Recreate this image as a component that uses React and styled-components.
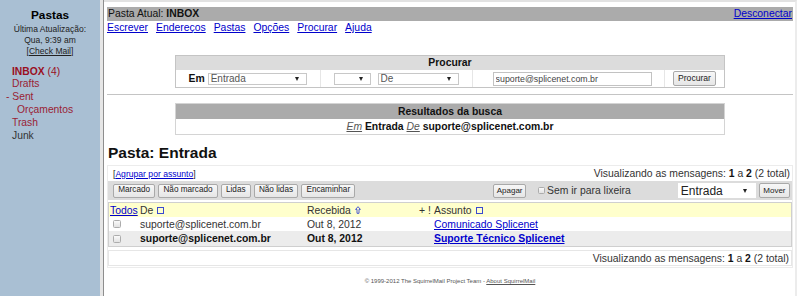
import React from "react";
import styled, { createGlobalStyle } from "styled-components";

const LINK = "#0000cc";

const GlobalStyle = createGlobalStyle`
  html, body {
    margin: 0;
    padding: 0;
    background: #fff;
  }
  body {
    font-family: "Liberation Sans", Arial, sans-serif;
    font-size: 10.4px;
    color: #222;
  }
  a {
    color: ${LINK};
    text-decoration: underline;
  }
`;

const Frame = styled.div`
  display: flex;
  width: 799px;
  height: 296px;
  overflow: hidden;
`;

/* left frame */
const Sidebar = styled.div`
  width: 100px;
  flex-shrink: 0;
  background: #a9bfd3;
  padding-top: 8px;
  box-sizing: border-box;
`;
const SideTitle = styled.div`
  font-weight: bold;
  font-size: 11.8px;
  line-height: 14px;
  text-align: center;
  color: #000;
`;
const SideInfo = styled.div`
  margin-top: 1.6px;
  font-size: 8.5px;
  line-height: 11px;
  text-align: center;
  color: #222;
  a {
    color: #222;
  }
`;
const FolderList = styled.div`
  margin-top: 9px;
  font-size: 10.3px;
  line-height: 12.8px;
`;
const Folder = styled.div`
  padding-left: ${(p) => p.$indent}px;
  color: ${(p) => p.$color};
  white-space: nowrap;
  b {
    font-weight: bold;
  }
`;

const FrameBorder = styled.div`
  width: 3px;
  flex-shrink: 0;
  background: #e6e6e6;
  border-right: 1px solid #8e8e8e;
`;

/* right frame */
const Main = styled.div`
  flex: 1;
  min-width: 0;
  margin-right: 2px;
  border-top: 2px solid #e2e2e2;
  border-right: 2px solid #ececec;
  padding: 5px 2px 0 3px;
`;
const TitleBar = styled.div`
  display: flex;
  justify-content: space-between;
  height: 14px;
  line-height: 14px;
  padding: 0 1px;
  background: #ababab;
  color: #111;
`;
const NavLinks = styled.div`
  display: flex;
  gap: 8px;
  line-height: 13px;
`;

const Box = styled.div`
  width: 80%;
  margin: ${(p) => p.$margin};
  border: 1px solid ${(p) => p.$border};
`;
const BoxHeader = styled.div`
  height: ${(p) => p.$h}px;
  line-height: ${(p) => p.$h}px;
  background: ${(p) => p.$bg};
  text-align: center;
  font-weight: bold;
  color: #111;
`;
const SearchRow = styled.div`
  display: grid;
  grid-template-columns: 144px 152px 192px 1fr;
  height: 17px;
`;
const SearchCell = styled.div`
  display: flex;
  align-items: center;
  justify-content: center;
  gap: ${(p) => p.$gap || 0}px;
  border-left: ${(p) => (p.$first ? "none" : "1px solid #e6e6e6")};
`;
const Label = styled.b`
  color: #111;
`;
const SelectBox = styled.div`
  width: ${(p) => p.$w}px;
  height: ${(p) => p.$h}px;
  box-sizing: border-box;
  border: 1px solid ${(p) => p.$border || "#c8c8c8"};
  background: #fff;
  display: flex;
  align-items: center;
  justify-content: space-between;
  padding: 0 ${(p) => p.$pr || 7}px 0 2px;
  font-size: ${(p) => p.$size}px;
  color: ${(p) => p.$color || "#555"};
`;
const Arrow = styled.span`
  width: 0;
  height: 0;
  border-left: 2.5px solid transparent;
  border-right: 2.5px solid transparent;
  border-top: 4px solid #222;
`;
const TextInput = styled.input`
  width: 159px;
  height: 14px;
  box-sizing: border-box;
  margin-left: 8px;
  border: 1px solid #c2c2c2;
  padding: 0 2px;
  font-family: inherit;
  font-size: 8.8px;
  color: #444;
  outline: none;
`;
const Button = styled.button`
  height: ${(p) => p.$h || 14}px;
  box-sizing: border-box;
  padding: 0 ${(p) => p.$px}px;
  border: 1px solid #a9a9a9;
  border-radius: 2px;
  background: linear-gradient(#f7f7f7, #e6e6e6);
  font-family: inherit;
  font-size: ${(p) => p.$size}px;
  line-height: 1;
  color: #222;
  white-space: nowrap;
`;

const Rule = styled.hr`
  margin: 6px 0 0;
  border: none;
  border-top: 1px solid #c4c4c4;
  height: 0;
`;
const ResultRow = styled.div`
  height: 15px;
  line-height: 15px;
  text-align: center;
  color: #111;
  i {
    color: #555;
    text-decoration: underline;
  }
`;

const Heading = styled.div`
  margin: 9px 0 3px 1px;
  font-size: 15.5px;
  line-height: 18px;
  font-weight: bold;
  color: #111;
`;

const MessageArea = styled.div`
  border: 1px solid #ececec;
`;
const InfoRow = styled.div`
  display: flex;
  align-items: center;
  justify-content: ${(p) => p.$justify};
  height: ${(p) => p.$h}px;
  padding: 0 2px 0 5px;
  color: #333;
  b {
    color: #111;
  }
`;
const GroupLink = styled.span`
  font-size: 8.6px;
  color: #222;
`;
const Toolbar = styled.div`
  display: flex;
  align-items: center;
  justify-content: space-between;
  height: 19px;
  padding: 0 2px 0 5px;
  background: #dcdcdc;
`;
const ButtonGroup = styled.div`
  display: flex;
  align-items: center;
  gap: 3px;
`;
const CheckBox = styled.span`
  display: inline-block;
  width: ${(p) => p.$size || 7}px;
  height: ${(p) => p.$size || 7}px;
  box-sizing: border-box;
  border: 1px solid #acacac;
  border-radius: 1.5px;
  background: linear-gradient(#fafafa, #e2e2e2);
  margin: ${(p) => p.$margin || 0};
`;
const TrashOption = styled.span`
  display: flex;
  align-items: center;
  gap: 2px;
  margin: 0 44px 0 9px;
  color: #333;
`;

const MsgTable = styled.div`
  margin-top: 2px;
  border: 1px solid #cfcfcf;
`;
const MsgRow = styled.div`
  display: grid;
  grid-template-columns: 31px 167px 112px 15px 1fr;
  align-items: center;
  height: ${(p) => p.$h}px;
  background: ${(p) => p.$bg};
  font-weight: ${(p) => (p.$bold ? "bold" : "normal")};
  color: ${(p) => (p.$bold ? "#111" : "#333")};
  white-space: nowrap;
`;
const Cell = styled.div`
  display: flex;
  align-items: center;
  gap: 4px;
  padding-left: ${(p) => p.$pl || 0}px;
`;
const SortSquare = styled.span`
  width: 5px;
  height: 5px;
  border: 1px solid #3a4ad0;
`;
const BottomInfo = styled.div`
  margin: 3px 0 1px;
  border: 1px solid #e6e6e6;
`;
const Footer = styled.div`
  margin-top: 9px;
  font-size: 6px;
  line-height: 8px;
  text-align: center;
  color: #555;
  a {
    color: #555;
  }
`;

const SortUp = () => (
  <svg width="6" height="8" viewBox="0 0 6 8">
    <path
      d="M3 0.7 L5.4 3.4 L4 3.4 L4 7.3 L2 7.3 L2 3.4 L0.6 3.4 Z"
      fill="none"
      stroke="#3a4ad0"
      strokeWidth="0.9"
    />
  </svg>
);

const Viewing = () => (
  <span>
    Visualizando as mensagens: <b>1</b> a <b>2</b> (2 total)
  </span>
);

const messages = [
  { from: "suporte@splicenet.com.br", date: "Out 8, 2012", subject: "Comunicado Splicenet", bg: "#fff", h: 14 },
  { from: "suporte@splicenet.com.br", date: "Out 8, 2012", subject: "Suporte Técnico Splicenet", bg: "#ececec", h: 15, unread: true },
];

export default function App() {
  return (
    <>
      <GlobalStyle />
      <Frame>
        <Sidebar>
          <SideTitle>Pastas</SideTitle>
          <SideInfo>
            Última Atualização:
            <br />
            Qua, 9:39 am
            <br />[<a href="#">Check Mail</a>]
          </SideInfo>
          <FolderList>
            <Folder $indent={12} $color="#9a0f22">
              <b>INBOX</b> (4)
            </Folder>
            <Folder $indent={12} $color="#992233">Drafts</Folder>
            <Folder $indent={6} $color="#992233">- Sent</Folder>
            <Folder $indent={17} $color="#992233">Orçamentos</Folder>
            <Folder $indent={12} $color="#992233">Trash</Folder>
            <Folder $indent={12} $color="#333">Junk</Folder>
          </FolderList>
        </Sidebar>
        <FrameBorder />
        <Main>
          <TitleBar>
            <span>
              Pasta Atual: <b>INBOX</b>
            </span>
            <a href="#">Desconectar</a>
          </TitleBar>
          <NavLinks>
            {["Escrever", "Endereços", "Pastas", "Opções", "Procurar", "Ajuda"].map((l) => (
              <a key={l} href="#">
                {l}
              </a>
            ))}
          </NavLinks>

          <Box $margin="21px auto 0" $border="#c4c4c4">
            <BoxHeader $h={14} $bg="#dcdcdc">
              Procurar
            </BoxHeader>
            <SearchRow>
              <SearchCell $first $gap={3}>
                <Label>Em</Label>
                <SelectBox $w={99} $h={12} $size={10}>
                  Entrada
                  <Arrow />
                </SelectBox>
              </SearchCell>
              <SearchCell $gap={7}>
                <SelectBox $w={37} $h={12} $size={10}>
                  <span />
                  <Arrow />
                </SelectBox>
                <SelectBox $w={81} $h={12} $size={10}>
                  De
                  <Arrow />
                </SelectBox>
              </SearchCell>
              <SearchCell>
                <TextInput readOnly defaultValue="suporte@splicenet.com.br" />
              </SearchCell>
              <SearchCell>
                <Button $h={15} $px={4} $size={8.6}>
                  Procurar
                </Button>
              </SearchCell>
            </SearchRow>
          </Box>

          <Rule />

          <Box $margin="8px auto 0" $border="#d4d4d4">
            <BoxHeader $h={15} $bg="#ababab">
              Resultados da busca
            </BoxHeader>
            <ResultRow>
              <i>Em</i> <b>Entrada</b> <i>De</i> <b>suporte@splicenet.com.br</b>
            </ResultRow>
          </Box>

          <Heading>Pasta: Entrada</Heading>

          <MessageArea>
            <InfoRow $h={15} $justify="space-between">
              <GroupLink>
                [<a href="#">Agrupar por assunto</a>]
              </GroupLink>
              <Viewing />
            </InfoRow>
            <Toolbar>
              <ButtonGroup>
                {["Marcado", "Não marcado", "Lidas", "Não lidas", "Encaminhar"].map((b) => (
                  <Button key={b} $px={4.2} $size={8.2}>
                    {b}
                  </Button>
                ))}
              </ButtonGroup>
              <ButtonGroup>
                <Button $px={2.5} $size={8}>
                  Apagar
                </Button>
                <TrashOption>
                  <CheckBox />
                  Sem ir para lixeira
                </TrashOption>
                <SelectBox $w={78} $h={15} $size={12} $border="#fff" $color="#222" $pr={8}>
                  Entrada
                  <Arrow />
                </SelectBox>
                <Button $h={15} $px={3.5} $size={8}>
                  Mover
                </Button>
              </ButtonGroup>
            </Toolbar>

            <MsgTable>
              <MsgRow $h={14} $bg="#ffffcc">
                <Cell $pl={1}>
                  <a href="#">Todos</a>
                </Cell>
                <Cell>
                  De <SortSquare />
                </Cell>
                <Cell>
                  Recebida <SortUp />
                </Cell>
                <Cell>+ !</Cell>
                <Cell>
                  Assunto <SortSquare />
                </Cell>
              </MsgRow>
              {messages.map((m, i) => (
                <MsgRow key={i} $h={m.h} $bg={m.bg} $bold={m.unread}>
                  <Cell>
                    <CheckBox $size={8} $margin="0 0 0 4px" />
                  </Cell>
                  <Cell>{m.from}</Cell>
                  <Cell>{m.date}</Cell>
                  <Cell />
                  <Cell>
                    <a href="#">{m.subject}</a>
                  </Cell>
                </MsgRow>
              ))}
            </MsgTable>

            <BottomInfo>
              <InfoRow $h={14} $justify="flex-end">
                <Viewing />
              </InfoRow>
            </BottomInfo>
          </MessageArea>

          <Footer>
            © 1999-2012 The SquirrelMail Project Team - <a href="#">About SquirrelMail</a>
          </Footer>
        </Main>
      </Frame>
    </>
  );
}
